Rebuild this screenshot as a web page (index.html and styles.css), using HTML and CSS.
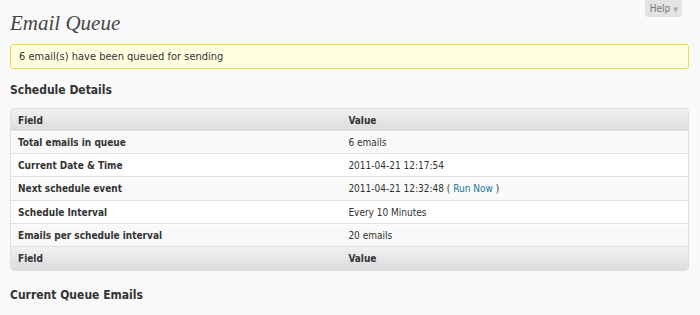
FILE: index.html
```html
<!DOCTYPE html>
<html lang="en">
<head>
  <meta charset="UTF-8">
  <title>Email Queue</title>
  <link rel="stylesheet" href="styles.css">
</head>
<body>

<div id="screen-meta">
  <button class="help-tab">Help <span class="arrow">&#9660;</span></button>
</div>

<div class="wrap">
  <h2 class="page-title">Email Queue</h2>

  <div class="updated">6 email(s) have been queued for sending</div>

  <h3 class="section-title">Schedule Details</h3>
  <table class="widefat">
    <thead>
      <tr><th class="field">Field</th><th>Value</th></tr>
    </thead>
    <tbody>
      <tr class="alt"><td class="field">Total emails in queue</td><td>6 emails</td></tr>
      <tr><td class="field">Current Date &amp; Time</td><td>2011-04-21 12:17:54</td></tr>
      <tr class="alt"><td class="field">Next schedule event</td><td>2011-04-21 12:32:48 ( <a href="#">Run Now</a> )</td></tr>
      <tr><td class="field">Schedule Interval</td><td>Every 10 Minutes</td></tr>
      <tr class="alt"><td class="field">Emails per schedule interval</td><td>20 emails</td></tr>
    </tbody>
    <tfoot>
      <tr><th class="field">Field</th><th>Value</th></tr>
    </tfoot>
  </table>

  <h3 class="section-title queue-title">Current Queue Emails</h3>
</div>

</body>
</html>
```

FILE: styles.css
```css
body {
    background: #f9f9f9;
    color: #333;
    margin: 0;
    padding: 0;
    font-family: 'DejaVu Sans Condensed', 'DejaVu Sans', Verdana, sans-serif;
    font-stretch: condensed;
    font-size: 11px;
}

#screen-meta {
    float: right;
    margin-right: 18px;
}

.help-tab {
    background: #e3e3e3;
    border: none;
    border-radius: 0 0 3px 3px;
    color: #777;
    font-family: 'DejaVu Sans Condensed', 'DejaVu Sans', sans-serif;
    font-stretch: condensed;
    font-size: 10px;
    height: 17px;
    padding: 0 4px 0 5px;
    cursor: pointer;
}

.help-tab .arrow {
    color: #aaa;
    font-size: 7px;
}

.wrap {
    padding: 0 11px 0 10px;
}

.page-title {
    font-family: 'Liberation Serif', 'Times New Roman', serif;
    font-style: italic;
    font-weight: normal;
    font-size: 21px;
    color: #464646;
    margin: 0;
    padding-top: 9px;
    line-height: 29px;
}

.updated {
    background: #ffffe0;
    border: 1px solid #e6db55;
    border-radius: 3px;
    margin-top: 6px;
    padding: 5px 8px;
    font-size: 11px;
    color: #333;
    line-height: 13px;
}

.section-title {
    font-size: 12px;
    font-weight: bold;
    color: #333;
    line-height: 14px;
    margin: 14px 0 11px 0;
}

.queue-title {
    margin-top: 17px;
}

.widefat {
    width: 100%;
    border-collapse: separate;
    border-spacing: 0;
    border: 1px solid #dfdfdf;
    border-radius: 4px;
    background: #f9f9f9;
}

.widefat th {
    text-align: left;
    font-weight: bold;
    font-size: 10px;
    color: #333;
    padding: 0 7px;
    height: 22px;
    background: linear-gradient(to bottom, #f1f1f1, #dcdcdc);
}

.widefat tfoot th {
    height: 23px;
}

.widefat thead th:first-child { border-top-left-radius: 3px; }
.widefat thead th:last-child { border-top-right-radius: 3px; }
.widefat tfoot th:first-child { border-bottom-left-radius: 3px; }
.widefat tfoot th:last-child { border-bottom-right-radius: 3px; }

.widefat td {
    padding: 0 7px;
    height: 21.2px;
    font-size: 10px;
    color: #333;
    border-top: 1px solid #fff;
    border-bottom: 1px solid #dfdfdf;
    background: #fff;
}

.widefat .field {
    width: 48.8%;
}

.widefat tr.alt td {
    background: #f9f9f9;
}

.widefat td.field {
    font-weight: bold;
}

.widefat a {
    color: #21759b;
    text-decoration: none;
}
```
